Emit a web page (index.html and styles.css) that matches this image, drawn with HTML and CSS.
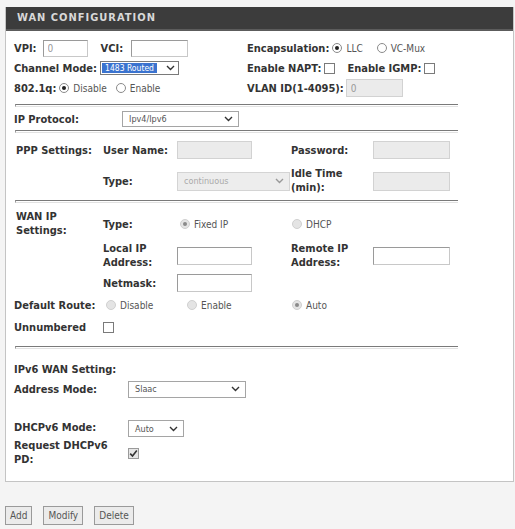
FILE: index.html
```html
<!DOCTYPE html>
<html>
<head>
<meta charset="utf-8">
<link rel="stylesheet" href="styles.css">
</head>
<body>
<div class="panel">
  <div class="hd">WAN CONFIGURATION</div>
  <div class="content">
    <div class="s1">
      <div class="cell">
        <span class="b">VPI:</span><input class="in vpi" value="0"><span class="b vcil">VCI:</span><input class="in vci">
      </div>
      <div class="cell">
        <span class="b">Encapsulation:</span><span class="radio on ml2"></span><span class="t">LLC</span><span class="radio ml3"></span><span class="t">VC-Mux</span>
      </div>
      <div class="cell">
        <span class="b">Channel Mode:</span><span class="sel chan"><span class="hl">1483 Routed</span><svg class="chev" width="9" height="6" viewBox="0 0 9 6"><path d="M1 1 L4.5 4.5 L8 1" fill="none" stroke="#333" stroke-width="1.4"/></svg></span>
      </div>
      <div class="cell">
        <span class="b">Enable NAPT:</span><span class="chk ml2"></span><span class="b igmp">Enable IGMP:</span><span class="chk ml2"></span>
      </div>
      <div class="cell">
        <span class="b">802.1q:</span><span class="radio on ml2"></span><span class="t">Disable</span><span class="radio ml4"></span><span class="t">Enable</span>
      </div>
      <div class="cell">
        <span class="b">VLAN ID(1-4095):</span><input class="in dis vlan" value="0" disabled>
      </div>
    </div>
    <div class="hr hr1"></div>
    <div class="ipp">
      <span class="b">IP Protocol:</span>
      <span class="sel ipsel"><span class="val">Ipv4/Ipv6</span><svg class="chev" width="9" height="6" viewBox="0 0 9 6"><path d="M1 1 L4.5 4.5 L8 1" fill="none" stroke="#333" stroke-width="1.4"/></svg></span>
    </div>
    <div class="hr hr2"></div>
    <div class="grid ppp">
      <span class="b c1">PPP Settings:</span>
      <span class="b">User Name:</span>
      <input class="in dis w75" disabled>
      <span class="b">Password:</span>
      <input class="in dis w77" disabled>

      <span></span>
      <span class="b">Type:</span>
      <span class="sel dsel"><span class="val">continuous</span><svg class="chev" width="9" height="6" viewBox="0 0 9 6"><path d="M1 1 L4.5 4.5 L8 1" fill="none" stroke="#999" stroke-width="1.4"/></svg></span>
      <span class="b two">Idle Time<br>(min):</span>
      <input class="in dis w77 tall" disabled>
    </div>
    <div class="hr hr3"></div>
    <div class="grid wan">
      <span class="b two c1">WAN IP<br>Settings:</span>
      <span class="b">Type:</span>
      <span class="opt o3"><span class="radio dis on"></span><span class="t">Fixed IP</span></span>
      <span class="opt o1"><span class="radio dis"></span><span class="t">DHCP</span></span>
      <span></span>

      <span></span>
      <span class="b two">Local IP<br>Address:</span>
      <input class="in w75">
      <span class="b two">Remote IP<br>Address:</span>
      <input class="in w77">

      <span></span>
      <span class="b">Netmask:</span>
      <input class="in w75">
      <span></span>
      <span></span>

      <span class="b">Default Route:</span>
      <span class="opt o2"><span class="radio dis"></span><span class="t">Disable</span></span>
      <span class="opt o10"><span class="radio dis"></span><span class="t">Enable</span></span>
      <span class="opt o1"><span class="radio dis on"></span><span class="t">Auto</span></span>
      <span></span>

      <span class="b">Unnumbered</span>
      <span class="opt"><span class="chk"></span></span>
      <span></span>
      <span></span>
      <span></span>
    </div>
    <div class="hr hr4"></div>
    <div class="v6">
      <span class="b">IPv6 WAN Setting:</span>
      <span></span>
      <span class="b">Address Mode:</span>
      <span class="sel amsel"><span class="val">Slaac</span><svg class="chev" width="9" height="6" viewBox="0 0 9 6"><path d="M1 1 L4.5 4.5 L8 1" fill="none" stroke="#333" stroke-width="1.4"/></svg></span>
      <span class="b r-dh">DHCPv6 Mode:</span>
      <span class="sel dhsel r-dh"><span class="val">Auto</span><svg class="chev" width="9" height="6" viewBox="0 0 9 6"><path d="M1 1 L4.5 4.5 L8 1" fill="none" stroke="#333" stroke-width="1.4"/></svg></span>
      <span class="b two">Request DHCPv6<br>PD:</span>
      <span class="chk grey"><svg width="9" height="9" viewBox="0 0 9 9"><path d="M1.2 4.6 L3.5 7 L7.8 1.6" fill="none" stroke="#333" stroke-width="1.6"/></svg></span>
    </div>
  </div>
</div>
<div class="btns">
  <button class="btn">Add</button><button class="btn">Modify</button><button class="btn">Delete</button>
</div>
</body>
</html>
```

FILE: styles.css
```css
* { box-sizing: border-box; }
html, body { margin: 0; padding: 0; }
body {
  width: 515px;
  height: 529px;
  overflow: hidden;
  background: #f4f4f4;
  font-family: "DejaVu Sans Condensed", "DejaVu Sans", sans-serif;
  font-size: 10px;
  color: #555;
}
.panel {
  margin: 7px 0 0 5px;
  width: 509px;
  background: #fff;
  border: 1px solid #c4c4c4;
  border-top: 0;
}
.hd {
  height: 24px;
  background: #3c3c3c;
  border-bottom: 2px solid #5c5c5c;
  color: #d8d8d8;
  font-weight: bold;
  font-size: 11px;
  letter-spacing: 1px;
  line-height: 22px;
  padding-left: 11px;
}
.content { padding: 7px 0 14px 8px; }
.b { font-weight: bold; font-size: 11px; color: #333; white-space: nowrap; }
.t { color: #555; margin-left: 4px; white-space: nowrap; }
.two { line-height: 14px; white-space: normal; }

.s1 { display: grid; grid-template-columns: 233px auto; grid-auto-rows: 20px; align-items: center; }
.cell { display: flex; align-items: center; }

.in {
  height: 17px;
  border: 1px solid #9a9a9a;
  border-right-color: #c8c8c8;
  border-bottom-color: #c8c8c8;
  background: #fff;
  font: inherit;
  color: #999;
  padding: 0 4px;
  margin: 0;
}
.in.dis { background: #ebebeb; border-color: #d2d2d2; }
.vpi { width: 45px; margin-left: 6px; }
.vcil { margin-left: 13px; }
.vci { width: 57px; margin-left: 8px; }
.vlan { width: 57px; margin-left: 2px; height: 18px; }
.w75 { width: 75px; height: 18px; }
.w77 { width: 77px; height: 18px; }
.tall { height: 19px; }

.ml2 { margin-left: 3px; }
.ml3 { margin-left: 14px; }
.ml4 { margin-left: 9px; }
.igmp { margin-left: 12px; }

.radio {
  display: inline-block;
  width: 10px;
  height: 10px;
  border-radius: 50%;
  border: 1px solid #8a8a8a;
  background: #fff;
  position: relative;
  flex: none;
}
.radio.on::after {
  content: "";
  position: absolute;
  left: 2px; top: 2px;
  width: 4px; height: 4px;
  border-radius: 50%;
  background: #222;
}
.radio.dis { border-color: #d0d0d0; background: #e4e4e4; }
.radio.dis.on::after { background: #8a8a8a; }

.chk {
  display: inline-flex;
  align-items: center;
  justify-content: center;
  width: 11px;
  height: 11px;
  border: 1px solid #7a7a7a;
  background: #fff;
  flex: none;
}
.chk.grey { background: #e6e6e6; border-color: #9a9a9a; }

.sel {
  display: inline-flex;
  align-items: center;
  justify-content: space-between;
  height: 16px;
  border: 1px solid #a5a5a5;
  background: #fff;
  color: #555;
  font-size: 9px;
  padding: 0 5px 0 6px;
}
.chev { flex: none; }
.chan { width: 79px; margin-left: 3px; height: 14px; padding: 0 3px 0 1px; border-color: #7a7a7a; }
.hl { background: #3b73cf; color: #fff; padding: 0 3px; line-height: 10px; font-size: 8.5px; }
.ipsel { width: 117px; }
.dsel { width: 113px; height: 19px; background: #ededed; border-color: #d4d4d4; color: #aaa; }
.amsel { width: 118px; height: 17px; }
.dhsel { width: 56px; height: 17px; }

.hr {
  width: 443px;
  margin-left: 1px;
  height: 3px;
  border-top: 1px solid #7a7a7a;
  border-left: 1px solid #9a9a9a;
  border-bottom: 1px solid #e2e2e2;
}
.hr1 { margin-top: 6px; }
.hr2 { margin-top: 2px; }
.hr3 { margin-top: 5px; }
.hr4 { margin-top: 10px; }

.ipp { display: grid; grid-template-columns: 108px auto; align-items: center; height: 18px; margin-top: 3px; }

.grid {
  display: grid;
  grid-template-columns: 89px 74px 114px 82px auto;
  align-items: center;
}
.c1 { padding-left: 2px; }
.ppp { margin-top: 8px; grid-template-rows: 18px 28px; row-gap: 8px; }
.wan { margin-top: 7px; grid-template-rows: 28px 28px 18px 18px 18px; row-gap: 4px; }
.opt { display: flex; align-items: center; }
.o1 { padding-left: 1px; }
.o2 { padding-left: 3px; }
.o3 { padding-left: 3px; }
.o10 { padding-left: 10px; }

.v6 {
  margin-top: 11px;
  display: grid;
  grid-template-columns: 114px auto;
  grid-template-rows: 18px 18px 37px 28px;
  row-gap: 2px;
  align-items: center;
  justify-items: start;
}
.v6 > .r-dh { align-self: end; }
.v6 > span.b.r-dh { line-height: 18px; }

.btns { display: flex; gap: 11px; margin: 24px 0 0 5px; }
.btn {
  height: 19px;
  padding: 0 4px;
  font: inherit;
  font-size: 10px;
  color: #555;
  background: #ebebeb;
  border: 1px solid #9a9a9a;
  border-radius: 0;
}
```
